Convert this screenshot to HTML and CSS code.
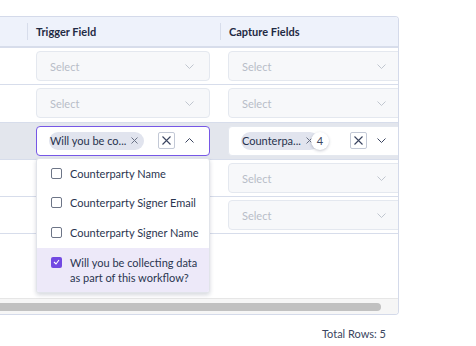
FILE: index.html
```html
<!DOCTYPE html>
<html>
<head>
<meta charset="utf-8">
<link rel="stylesheet" href="styles.css">
</head>
<body>
<div class="page">
  <div class="table">
    <div class="head">
      <div class="col0"></div>
      <div class="col1 th"><span class="sep"></span><span class="th-text">Trigger Field</span></div>
      <div class="col2 th"><span class="sep"></span><span class="th-text">Capture Fields</span></div>
    </div>
    <div class="body">
      <div class="row">
        <div class="col0"></div>
        <div class="col1 cell"><div class="select"><span class="ph">Select</span><svg class="chev" width="9" height="5" viewBox="0 0 9 5"><path d="M0.5 0.5 L4.5 4.5 L8.5 0.5" fill="none" stroke="#b9bfca" stroke-width="0.9"/></svg></div></div>
        <div class="col2 cell"><div class="select"><span class="ph">Select</span><svg class="chev" width="9" height="5" viewBox="0 0 9 5"><path d="M0.5 0.5 L4.5 4.5 L8.5 0.5" fill="none" stroke="#b9bfca" stroke-width="0.9"/></svg></div></div>
      </div>
      <div class="row">
        <div class="col0"></div>
        <div class="col1 cell"><div class="select"><span class="ph">Select</span><svg class="chev" width="9" height="5" viewBox="0 0 9 5"><path d="M0.5 0.5 L4.5 4.5 L8.5 0.5" fill="none" stroke="#b9bfca" stroke-width="0.9"/></svg></div></div>
        <div class="col2 cell"><div class="select"><span class="ph">Select</span><svg class="chev" width="9" height="5" viewBox="0 0 9 5"><path d="M0.5 0.5 L4.5 4.5 L8.5 0.5" fill="none" stroke="#b9bfca" stroke-width="0.9"/></svg></div></div>
      </div>
      <div class="row active">
        <div class="col0"></div>
        <div class="col1 cell">
          <div class="select-wrap">
            <div class="select open">
              <div class="values">
                <span class="chip">Will you be co...<svg class="chip-x" width="7" height="7" viewBox="0 0 7 7"><path d="M0.5 0.5 L6.5 6.5 M6.5 0.5 L0.5 6.5" stroke="#6b7386" stroke-width="1"/></svg></span>
              </div>
              <span class="clear"><svg width="11" height="11" viewBox="0 0 11 11"><path d="M1.5 1.5 L9.5 9.5 M9.5 1.5 L1.5 9.5" stroke="#3b4560" stroke-width="1.1"/></svg></span>
              <svg class="chev" width="9" height="5" viewBox="0 0 9 5"><path d="M0.5 4.5 L4.5 0.5 L8.5 4.5" fill="none" stroke="#3b4560" stroke-width="1"/></svg>
            </div>
            <div class="menu">
              <div class="item"><span class="cb"></span><span class="lbl">Counterparty Name</span></div>
              <div class="item"><span class="cb"></span><span class="lbl">Counterparty Signer Email</span></div>
              <div class="item"><span class="cb"></span><span class="lbl">Counterparty Signer Name</span></div>
              <div class="item selected"><span class="cb checked"><svg width="7" height="6" viewBox="0 0 7 6"><path d="M1 3 L3 5 L6 1" fill="none" stroke="#fff" stroke-width="1.1"/></svg></span><span class="lbl">Will you be collecting data as part of this workflow?</span></div>
            </div>
          </div>
        </div>
        <div class="col2 cell">
          <div class="select filled">
            <div class="values">
              <span class="chip">Counterpa...<svg class="chip-x" width="7" height="7" viewBox="0 0 7 7"><path d="M0.5 0.5 L6.5 6.5 M6.5 0.5 L0.5 6.5" stroke="#6b7386" stroke-width="1"/></svg></span>
              <span class="badge">4</span>
            </div>
            <span class="clear"><svg width="11" height="11" viewBox="0 0 11 11"><path d="M1.5 1.5 L9.5 9.5 M9.5 1.5 L1.5 9.5" stroke="#3b4560" stroke-width="1.1"/></svg></span>
            <svg class="chev" width="9" height="5" viewBox="0 0 9 5"><path d="M0.5 0.5 L4.5 4.5 L8.5 0.5" fill="none" stroke="#3b4560" stroke-width="1"/></svg>
          </div>
        </div>
      </div>
      <div class="row">
        <div class="col0"></div>
        <div class="col1 cell"><div class="select covered"><span class="ph">Select</span><svg class="chev" width="9" height="5" viewBox="0 0 9 5"><path d="M0.5 0.5 L4.5 4.5 L8.5 0.5" fill="none" stroke="#b9bfca" stroke-width="0.9"/></svg></div></div>
        <div class="col2 cell"><div class="select"><span class="ph">Select</span><svg class="chev" width="9" height="5" viewBox="0 0 9 5"><path d="M0.5 0.5 L4.5 4.5 L8.5 0.5" fill="none" stroke="#b9bfca" stroke-width="0.9"/></svg></div></div>
      </div>
      <div class="row">
        <div class="col0"></div>
        <div class="col1 cell"><div class="select covered"><span class="ph">Select</span><svg class="chev" width="9" height="5" viewBox="0 0 9 5"><path d="M0.5 0.5 L4.5 4.5 L8.5 0.5" fill="none" stroke="#b9bfca" stroke-width="0.9"/></svg></div></div>
        <div class="col2 cell"><div class="select"><span class="ph">Select</span><svg class="chev" width="9" height="5" viewBox="0 0 9 5"><path d="M0.5 0.5 L4.5 4.5 L8.5 0.5" fill="none" stroke="#b9bfca" stroke-width="0.9"/></svg></div></div>
      </div>
    </div>
    <div class="hscroll"><div class="thumb"></div></div>
  </div>
  <div class="footer">Total Rows: 5</div>
</div>
</body>
</html>
```

FILE: styles.css
```css
* { box-sizing: border-box; }
body {
  margin: 0;
  background: #fff;
  font-family: Lato, "Noto Sans", sans-serif;
  color: #27324d;
  font-size: 11px;
}
.page {
  padding-top: 16px;
  width: 399px;
}
.table {
  border: 1px solid #d4daea;
  border-left: 0;
  border-radius: 0 4px 4px 0;
  overflow: hidden;
}
.head {
  display: flex;
  height: 31px;
  background: #eef2fb;
  border-bottom: 2px solid #d7ddeb;
}
.col0 { width: 27px; flex: none; }
.col1 { width: 193px; flex: none; }
.col2 { width: 193px; flex: none; }
.th {
  display: flex;
  align-items: center;
  font-weight: 700;
  color: #1f2a44;
}
.sep {
  width: 1px;
  height: 17px;
  background: #d7ddeb;
  margin-right: 8px;
}
.body {
  height: 250px;
}
.row {
  display: flex;
  align-items: center;
  height: 37.3px;
  border-bottom: 1px solid #d7ddeb;
}
.row.active { background: #e3e6ed; }
.col1.cell { padding-left: 9px; }
.col2.cell { padding-left: 8px; }
.select-wrap { position: relative; width: 174px; }
.select {
  width: 174px;
  height: 30px;
  border: 1px solid #e4e8ef;
  border-radius: 4px;
  background: #f7f8fa;
  display: flex;
  align-items: center;
  padding: 0 15px 0 13px;
}
.select.covered .ph { visibility: hidden; }
.ph { flex: 1; color: #b8bdc8; }
.chev { flex: none; }
.select.open {
  background: #fff;
  border: 1px solid #7657e6;
  padding-left: 12px;
}
.select.filled {
  background: #fff;
  border-color: #e4e8ef;
  padding-left: 12px;
}
.values { flex: 1; display: flex; align-items: center; }
.chip {
  display: inline-flex;
  align-items: center;
  height: 18px;
  border-radius: 9px;
  background: #e1e4ee;
  padding: 0 6px 0 1px;
  color: #27324d;
  white-space: nowrap;
}
.chip-x { margin-left: 5px; }
.badge {
  width: 18px;
  height: 18px;
  border-radius: 50%;
  background: #fff;
  box-shadow: 0 1px 3px rgba(30, 40, 70, 0.25);
  display: inline-flex;
  align-items: center;
  justify-content: center;
  margin-left: -8px;
  color: #3b4560;
}
.clear {
  width: 17px;
  height: 17px;
  border: 1px solid #c3c9d6;
  border-radius: 2px;
  display: flex;
  align-items: center;
  justify-content: center;
  margin-right: 10px;
  background: #fff;
}
.menu {
  position: absolute;
  top: calc(100% + 2px);
  left: 0;
  width: 174px;
  background: #fff;
  border: 1px solid #e1e4ea;
  border-radius: 3px;
  box-shadow: 0 2px 4px rgba(30, 40, 70, 0.18);
  z-index: 5;
  overflow: hidden;
}
.item {
  display: flex;
  align-items: center;
  height: 30px;
  padding-left: 14px;
  color: #2a3550;
}
.item:first-child { height: 29px; }
.cb {
  width: 11px;
  height: 11px;
  border: 1.3px solid #6d7587;
  border-radius: 2px;
  margin-right: 8px;
  flex: none;
  display: flex;
  align-items: center;
  justify-content: center;
}
.item.selected {
  height: auto;
  align-items: flex-start;
  padding-top: 7px;
  padding-bottom: 7px;
  background: #ede9f9;
  line-height: 15px;
}
.item.selected .cb { margin-top: 2px; }
.cb.checked {
  border: 0;
  background: #7249e2;
}
.lbl { padding-right: 10px; }
.hscroll {
  height: 16px;
  border-top: 1px solid #e6e6e6;
  background: #f6f6f6;
  padding-top: 4px;
}
.thumb {
  width: 381px;
  height: 8px;
  border-radius: 0 4px 4px 0;
  background: #c1c1c1;
}
.footer {
  margin-top: 12px;
  text-align: right;
  padding-right: 13px;
  line-height: 14px;
  color: #3a4560;
}
```
